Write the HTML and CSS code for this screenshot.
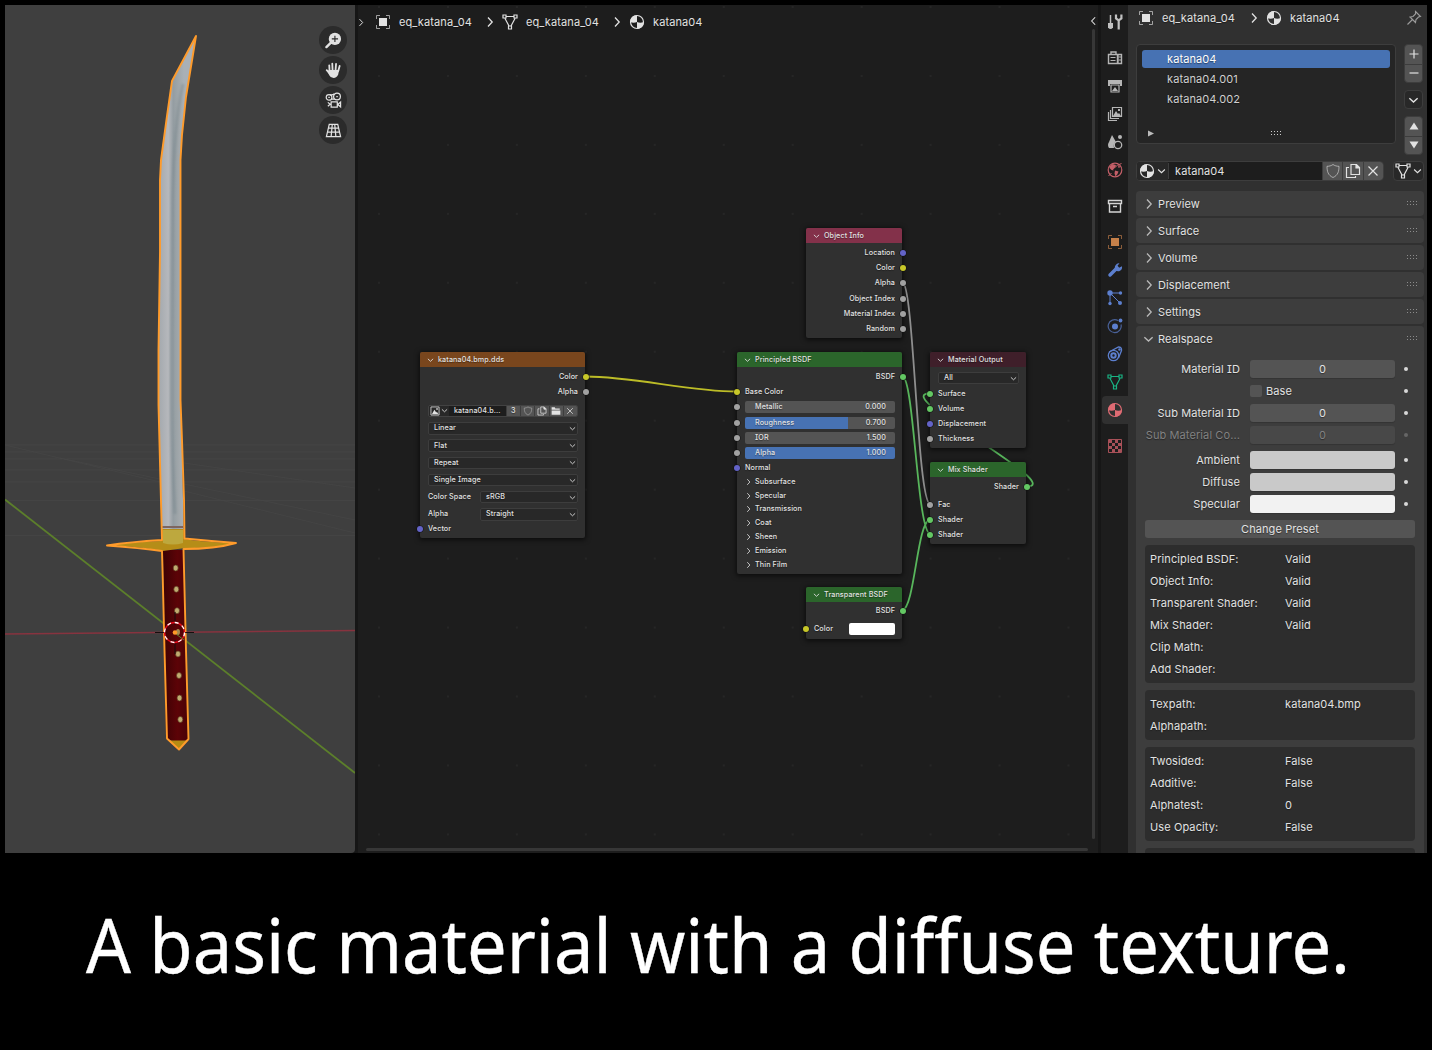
FILE: index.html
```html
<!DOCTYPE html>
<html lang="en">
<head>
<meta charset="utf-8">
<title>Katana material</title>
<link rel="stylesheet" href="styles.css">
</head>
<body>
<svg width="0" height="0" class="sprite" aria-hidden="true">
  <symbol id="object" viewBox="0 0 16 16"><path d="M1.500 5V1.500H5M11 1.500h3.500V5M14.500 11v3.500H11M5 14.500H1.500V11" fill="none" stroke="currentColor" stroke-opacity=".65"/><path d="M4 4h8v8H4z" fill="currentColor"/></symbol>
  <symbol id="mesh" viewBox="0 0 16 16"><path d="M4 2.500h8M3 4.500l4 7.500M13 4.500L9 12M1 1h3v3H1zM12 1h3v3h-3zM6.500 12h3v3h-3z" fill="none" stroke="currentColor" stroke-width="1.200"/></symbol>
  <symbol id="material" viewBox="0 0 16 16"><circle cx="8" cy="8" r="6.500" fill="none" stroke="currentColor" stroke-width="1.200"/><path d="M8 8V1.200C4 1.200 1.200 4 1.200 8 3 9 6 9 8 8zM8 8c2 1 4.500 1 6.800 0 0 4-3 6.800-6.800 6.800z" fill="currentColor"/></symbol>
  <symbol id="right" viewBox="0 0 8 12"><path d="M2 1.500L6.200 6 2 10.500" fill="none" stroke="currentColor" stroke-width="1.300"/></symbol>
  <symbol id="down" viewBox="0 0 12 8"><path d="M1.500 2L6 6.200 10.500 2" fill="none" stroke="currentColor" stroke-width="1.500"/></symbol>
  <symbol id="shield" viewBox="0 0 16 16"><path d="M8 1.500c1.800 1.300 3.800 1.800 6 1.800 0 5-1 9-6 11.200C3 12.300 2 8.300 2 3.300c2.200 0 4.200-.5 6-1.800z" fill="none" stroke="currentColor" stroke-opacity=".6"/></symbol>
  <symbol id="copy" viewBox="0 0 16 16"><path d="M6 1.500h5.500L14.500 4.500v7H6zM11 1.500V5h3.500M4 4.500H1.500v10h9V13" fill="none" stroke="currentColor" stroke-width="1.200"/><path d="M11 1l4 4h-4z" fill="currentColor"/></symbol>
  <symbol id="close" viewBox="0 0 16 16"><path d="M3.500 3.500l9 9M12.500 3.500l-9 9" stroke="currentColor" stroke-width="1.200"/></symbol>
  <symbol id="grip" viewBox="0 0 12 5"><path d="M0 .5h12M0 3.500h12" stroke="currentColor" stroke-dasharray="1 2"/></symbol>
  <symbol id="pin" viewBox="0 0 16 16"><path d="M9.500 1.500l5 5-2 .5-2.500 2.500-.5 3-5.500-5.500 3-.5L9.500 4zM6.500 9.500L1.500 14.500" fill="none" stroke="currentColor" stroke-width="1.100"/></symbol>
  <symbol id="image" viewBox="0 0 16 16"><path d="M1.500 1.500h13v13h-13z" fill="none" stroke="currentColor" stroke-width="1.300"/><path d="M3 13l4-7 3 4.500L11 9l2.500 4zM10 3.500h2.500V6H10z" fill="currentColor"/></symbol>
  <symbol id="folder" viewBox="0 0 16 16"><path d="M1 2h5l1 2h7v2H1zM1 7h14v7H1z" fill="currentColor"/></symbol>
</svg>

<main class="workspace">
  <section class="viewport">
    <svg class="scene" viewBox="5 5 350 848">
      <defs>
        <linearGradient id="steel" gradientUnits="userSpaceOnUse" x1="160" y1="0" x2="184" y2="0">
          <stop offset="0" stop-color="#a6abb0"/><stop offset=".35" stop-color="#b6b8bc"/><stop offset=".55" stop-color="#949da2"/><stop offset=".8" stop-color="#a2a8ab"/><stop offset="1" stop-color="#a9b0b6"/>
        </linearGradient>
        <linearGradient id="grip-red" gradientUnits="userSpaceOnUse" x1="163" y1="0" x2="189" y2="0">
          <stop offset="0" stop-color="#3c0204"/><stop offset=".55" stop-color="#5c0307"/><stop offset="1" stop-color="#480307"/>
        </linearGradient>
        <filter id="soft" x="-1" width="3"><feGaussianBlur stdDeviation="1"/></filter>
      </defs>
      <g stroke="#474747" fill="none"><path d="M5 445H355M5 452H355M5 459H355M5 470H355M5 482H355M5 500.500H355M5 535.500H355" opacity=".7"/><path d="M5 445L160 482M184 491L355 533M184 463L355 488M60 458L355 520" opacity=".6"/></g>
      <path d="M5 634L355 630.500" stroke="#87333f" stroke-width="1.400"/>
      <path d="M5 499.500L355 773" stroke="#5c7f2b" stroke-width="1.800"/>
      <path d="M196 36L172 81 162 150 160 175 160 252 158.500 350 158.500 405 161.500 530H183.500L182 440 180.500 400V160L182 135 186 97z" fill="url(#steel)"/>
      <path d="M183 84q-9 40-10.500 115l-1 140v65q0 50 3.500 110" stroke="#718087" stroke-width="3" fill="none" opacity=".4" filter="url(#soft)"/>
      <path d="M163 549.500L166 738 179 744 188 739 184 550z" fill="url(#grip-red)"/>
      <path d="M162 529h22l1 10q15 3 51 4-14 5-51 5l-22 3q-20-4-56-6 27-3 54-4z" fill="#b58d18"/>
      <path d="M163 530h20v13q-10 3-20 0z" fill="#bda83e"/>
      <path d="M162 527h22" stroke="#7d6560" stroke-width="2"/>
      <path d="M168 740.500h20l-9 9z" fill="#b58b13"/>
      <path d="M196 36L172 81 167 116 161 160 160 180 160 252 158.500 350 158.500 405 162 540Q130 542 107 545.500 140 548 162 551L163 588 164.500 650 167 738.500 179 749.500 188.500 739 186 650 183.500 549Q215 549 236 543 210 541 184.500 538.500L184 500 182 440 180.500 400V160L182 135 186 97z" fill="none" stroke="#ff9b2b" stroke-width="1.900" stroke-linejoin="round"/>
      <g fill="#c0ad71" stroke="#5d3920" stroke-width=".7"><ellipse cx="175.700" cy="568" rx="2.500" ry="3"/><ellipse cx="176.300" cy="589.300" rx="2.500" ry="3"/><ellipse cx="177" cy="610.700" rx="2.500" ry="3"/><ellipse cx="178" cy="654" rx="2.500" ry="3"/><ellipse cx="179" cy="675.500" rx="2.500" ry="3"/><ellipse cx="179.500" cy="698" rx="2.500" ry="3"/><ellipse cx="180.300" cy="719.500" rx="2.500" ry="3"/></g>
      <path d="M175 612v13M175 640v14M155 632.500h9M185 632.500h9" stroke="#160d0d"/>
      <circle cx="174.500" cy="632.500" r="10" fill="none" stroke="#e00a18" stroke-width="1.300"/>
      <circle cx="174.500" cy="632.500" r="10" fill="none" stroke="#fff" stroke-width="1.300" stroke-dasharray="3.900 3.950"/>
      <ellipse cx="178" cy="632" rx="2" ry="3" fill="#a28a50"/>
      <path d="M176 634l8 6" stroke="#5c7f2b"/>
      <circle cx="175" cy="632.500" r="2.300" fill="#ff9a28"/>
    </svg>
    <div class="gizmos">
      <span><svg viewBox="0 0 18 18"><circle cx="10.500" cy="7.300" r="6.500" fill="currentColor"/><path d="M6 11.500L1.500 16" stroke="currentColor" stroke-width="2.500" stroke-linecap="round"/><path d="M10.500 4v6.600M7.200 7.300h6.600" stroke="#2b2b2b" stroke-width="1.200"/></svg></span>
      <span><svg viewBox="0 0 18 18"><path d="M4.800 9.500L4.500 3.500M8 8.500L7.700 1.800M11.200 8.500l.5-6.500M14 9.500l1.500-5.300M6 13L1.800 8.600" stroke="currentColor" stroke-width="1.900" stroke-linecap="round"/><path d="M4 8.500h11l-1 4.500q-1.500 4-5 4-3 0-4.500-3L3 11z" fill="currentColor"/></svg></span>
      <span><svg viewBox="0 0 18 18" fill="none" stroke="currentColor" stroke-width="1.300"><circle cx="4.300" cy="5.700" r="3"/><circle cx="12.700" cy="4.800" r="3.600"/><path d="M5 2.800q3 1 5-1M7 7.500h3M6.500 10.500h6.500v5.500H6.500zM3 11l2.500 2L3 15M13.500 13.200l3-2.500v5z"/><path d="M3.500 5.700h1.600M12 4.800h1.500"/></svg></span>
      <span><svg viewBox="0 0 18 18" fill="none" stroke="currentColor" stroke-width="1.300"><path d="M4.500 2.500h9l3 13h-15zM3.600 6.500h10.800M2.700 10.700h12.600M7.700 2.500L6.500 15.500M10.300 2.500l1.200 13"/></svg></span>
    </div>
  </section>

  <section class="editor">
    <svg class="links" viewBox="358 5 740 848" fill="none" stroke-width="1.800">
      <defs><pattern id="dots" patternUnits="userSpaceOnUse" x="378" y="6" width="68.950" height="68.950"><path d="M0 0h2v2H0z" fill="#262626"/></pattern></defs>
      <path d="M358 5h740v848H358z" fill="url(#dots)"/>
      <path d="M585.500 376.500C635 376.500 688 391.500 737 391.500" stroke="#bcbc27"/>
      <path d="M902.500 282.500C914 284 917 500 930 504" stroke="#8e8e8e"/>
      <path d="M902.500 376.500C914 378 917 530 930 534M902.500 610.500C915 606 917 522 930 519.500M1026.500 486.500C1068 486.500 888 393.500 930 393.500" stroke="#58b65c"/>
    </svg>
    <header class="crumbs">
      <svg class="tiny"><use href="#right"/></svg>
      <svg class="ico"><use href="#object"/></svg><span>eq_katana_04</span>
      <svg class="sep"><use href="#right"/></svg>
      <svg class="ico"><use href="#mesh"/></svg><span>eq_katana_04</span>
      <svg class="sep"><use href="#right"/></svg>
      <svg class="ico"><use href="#material"/></svg><span>katana04</span>
    </header>
    <i class="vbar"></i><i class="hbar"></i>
    <svg class="toggle"><use href="#right"/></svg>

    <article class="node object-info">
      <h3><svg><use href="#down"/></svg>Object Info</h3>
      <p class="out vector">Location</p><p class="out color">Color</p><p class="out">Alpha</p><p class="out">Object Index</p><p class="out">Material Index</p><p class="out">Random</p>
    </article>

    <article class="node texture">
      <h3><svg><use href="#down"/></svg>katana04.bmp.dds</h3>
      <p class="out color">Color</p><p class="out">Alpha</p>
      <div class="datablock">
        <span class="pick"><svg class="pic"><use href="#image"/></svg><svg class="arrow"><use href="#down"/></svg></span><span class="name">katana04.b...</span><b>3</b><b><svg><use href="#shield"/></svg></b><b><svg><use href="#copy"/></svg></b><b><svg><use href="#folder"/></svg></b><b><svg><use href="#close"/></svg></b>
      </div>
      <div class="field"><span class="select">Linear<svg><use href="#down"/></svg></span></div>
      <div class="field"><span class="select">Flat<svg><use href="#down"/></svg></span></div>
      <div class="field"><span class="select">Repeat<svg><use href="#down"/></svg></span></div>
      <div class="field"><span class="select">Single Image<svg><use href="#down"/></svg></span></div>
      <div class="field"><label>Color Space</label><span class="select">sRGB<svg><use href="#down"/></svg></span></div>
      <div class="field"><label>Alpha</label><span class="select">Straight<svg><use href="#down"/></svg></span></div>
      <p class="in vector">Vector</p>
    </article>

    <article class="node principled">
      <h3><svg><use href="#down"/></svg>Principled BSDF</h3>
      <p class="out shader">BSDF</p><p class="in color">Base Color</p>
      <p class="in"><span class="slider">Metallic<em>0.000</em></span></p>
      <p class="in"><span class="slider rough">Roughness<em>0.700</em></span></p>
      <p class="in"><span class="slider">IOR<em>1.500</em></span></p>
      <p class="in"><span class="slider full">Alpha<em>1.000</em></span></p>
      <p class="in vector">Normal</p>
      <ul><li><svg><use href="#right"/></svg>Subsurface</li><li><svg><use href="#right"/></svg>Specular</li><li><svg><use href="#right"/></svg>Transmission</li><li><svg><use href="#right"/></svg>Coat</li><li><svg><use href="#right"/></svg>Sheen</li><li><svg><use href="#right"/></svg>Emission</li><li><svg><use href="#right"/></svg>Thin Film</li></ul>
    </article>

    <article class="node output">
      <h3><svg><use href="#down"/></svg>Material Output</h3>
      <div class="field"><span class="select">All<svg><use href="#down"/></svg></span></div>
      <p class="in shader">Surface</p><p class="in shader">Volume</p><p class="in vector">Displacement</p><p class="in">Thickness</p>
    </article>

    <article class="node mix">
      <h3><svg><use href="#down"/></svg>Mix Shader</h3>
      <p class="out shader">Shader</p><p class="in fac">Fac</p><p class="in shader">Shader</p><p class="in shader">Shader</p>
    </article>

    <article class="node transparent">
      <h3><svg><use href="#down"/></svg>Transparent BSDF</h3>
      <p class="out shader">BSDF</p><p class="in color tint">Color<i></i></p>
    </article>
  </section>

  <nav class="tabs">
    <span class="tool"><svg viewBox="0 0 16 16"><path d="M3.500 1v8" stroke="currentColor" stroke-width="1.500"/><path d="M1 9h5v4.500q-2.500 3-5 0z" fill="currentColor"/><path d="M9 .5v4l2.700 2 2.700-2v-4M11.700 6v9.500" fill="none" stroke="currentColor" stroke-width="2.200"/></svg></span>
    <span><svg viewBox="0 0 16 16"><path d="M1.500 4.500h9v9h-9zM4 4V2h5v2M11 4.500h3.500v9H11z" fill="none" stroke="currentColor" stroke-width="1.400"/><path d="M3.500 7.500h5M3.500 10.500h5M11.500 7h3M11.500 10h3" stroke="currentColor"/></svg></span>
    <span><svg viewBox="0 0 16 16"><path d="M1 2h14v6h-2V6H3v2H1z" fill="currentColor"/><path d="M4 7h8v7H4z" fill="none" stroke="currentColor" stroke-width="1.200"/><path d="M5 13l3-4 3 4z" fill="currentColor"/></svg></span>
    <span><svg viewBox="0 0 16 16"><path d="M5.500 1.500h9v9h-9zM3.500 4v8.500H12M1.500 6v8.500H10" fill="none" stroke="currentColor" stroke-width="1.200"/><path d="M6 10l3-5 2 3 1-1 2 3zM11 3h2v2h-2z" fill="currentColor"/></svg></span>
    <span><svg viewBox="0 0 16 16"><path d="M5 1l4 7q-3 1-2 6H2q-2-3 0-6z" fill="currentColor"/><circle cx="11" cy="11" r="3.700" fill="none" stroke="currentColor" stroke-width="1.300"/><circle cx="13" cy="3" r="2" fill="currentColor"/></svg></span>
    <span class="red"><svg viewBox="0 0 16 16"><circle cx="8" cy="8" r="6.800" fill="none" stroke="currentColor" stroke-width="1.200"/><path d="M2.500 4.500l3-2.500 3.500 1-1 2.500-2 1 .5 2-2-.5-2-2zM8 8.500l3.500 1-1 2.500-2 2.500-1-3zM11 3l2.500 2-2 1z" fill="currentColor"/><path d="M14.500 1.500Q11 2 6 7M1.500 14l3-3" stroke="currentColor" fill="none"/></svg></span>
    <span class="collection"><svg viewBox="0 0 16 16"><path d="M1.500 2.500h13v3h-13zM2.500 6v8h11V6M6 8.500h4" fill="none" stroke="currentColor" stroke-width="1.400"/></svg></span>
    <span class="orange"><svg><use href="#object"/></svg></span>
    <span class="blue"><svg viewBox="0 0 16 16"><path d="M3 13l7-7" stroke="currentColor" stroke-width="3.500" stroke-linecap="round"/><path d="M12.500 1.200l-2 2.500 1.500 2 3-1.500q.5 3-2 4.500t-5-1q-1-4 2-6 1-.7 2.500-.5z" fill="currentColor"/></svg></span>
    <span class="blue"><svg viewBox="0 0 16 16"><path d="M3 3h10M3 3l10 10M3 3v10" stroke="currentColor"/><g fill="currentColor"><circle cx="3" cy="3" r="2.700"/><circle cx="13.500" cy="3" r="1.700"/><circle cx="13" cy="13" r="2"/><circle cx="3" cy="13.500" r="1.700"/></g></svg></span>
    <span class="blue"><svg viewBox="0 0 16 16"><path d="M11 2.500A6.500 6.500 0 1 0 14 6.500" fill="none" stroke="currentColor" stroke-width="1.200" opacity=".7"/><circle cx="8" cy="8.500" r="3" fill="currentColor"/><circle cx="13.500" cy="2.500" r="1.900" fill="currentColor"/></svg></span>
    <span class="blue"><svg viewBox="0 0 16 16" fill="none" stroke="currentColor" stroke-width="1.300"><path d="M2 6L11.500 1q3.500 0 3 3.500L11.500 12"/><circle cx="6.500" cy="9.500" r="5.200"/><circle cx="6.500" cy="9.500" r="2.200" stroke-width="2"/><circle cx="12.500" cy="3.500" r=".7"/></svg></span>
    <span class="green"><svg><use href="#mesh"/></svg></span>
    <span class="red active"><svg><use href="#material"/></svg></span>
    <span class="red last"><svg viewBox="0 0 16 16"><path d="M1.500 1.500h13v13h-13z" fill="none" stroke="currentColor"/><path d="M2 2h3v3H2zM8 2h3v3H8zM5 5h3v3H5zM11 5h3v3h-3zM2 8h3v3H2zM8 8h3v3H8zM5 11h3v3H5zM11 11h3v3h-3z" fill="currentColor"/></svg></span>
  </nav>

  <aside class="props">
    <header class="path">
      <svg class="ico"><use href="#object"/></svg><span>eq_katana_04</span><svg class="sep"><use href="#right"/></svg><svg class="ico"><use href="#material"/></svg><span>katana04</span><svg class="ico pin"><use href="#pin"/></svg>
    </header>
    <div class="slots">
      <div class="list">
        <div class="item sel">katana04</div><div class="item">katana04.001</div><div class="item">katana04.002</div>
        <div class="foot"><svg class="tri" viewBox="0 0 6 6"><path d="M0 0l6 3-6 3z" fill="currentColor"/></svg><svg class="grip"><use href="#grip"/></svg></div>
      </div>
      <div class="side">
        <div class="stack"><b><svg viewBox="0 0 12 12"><path d="M6 1.500v9M1.500 6h9" stroke="currentColor" stroke-width="1.200"/></svg></b><b><svg viewBox="0 0 12 12"><path d="M1.500 6h9" stroke="currentColor" stroke-width="1.200"/></svg></b></div>
        <div class="stack dark"><b><svg><use href="#down"/></svg></b></div>
        <div class="stack"><b><svg viewBox="0 0 12 12"><path d="M6 2.500l4.500 7h-9z" fill="currentColor"/></svg></b><b><svg viewBox="0 0 12 12"><path d="M6 9.500l4.500-7h-9z" fill="currentColor"/></svg></b></div>
      </div>
    </div>
    <div class="matrow">
      <div class="matid"><span class="pick"><svg class="ico"><use href="#material"/></svg><svg class="arrow"><use href="#down"/></svg></span><span class="name">katana04</span><b><svg><use href="#shield"/></svg></b><b><svg><use href="#copy"/></svg></b><b><svg><use href="#close"/></svg></b></div>
      <span class="pick link"><svg class="ico"><use href="#mesh"/></svg><svg class="arrow"><use href="#down"/></svg></span>
    </div>
    <div class="panels">
      <div class="panel"><svg class="sep"><use href="#right"/></svg>Preview<svg class="grip"><use href="#grip"/></svg></div>
      <div class="panel"><svg class="sep"><use href="#right"/></svg>Surface<svg class="grip"><use href="#grip"/></svg></div>
      <div class="panel"><svg class="sep"><use href="#right"/></svg>Volume<svg class="grip"><use href="#grip"/></svg></div>
      <div class="panel"><svg class="sep"><use href="#right"/></svg>Displacement<svg class="grip"><use href="#grip"/></svg></div>
      <div class="panel"><svg class="sep"><use href="#right"/></svg>Settings<svg class="grip"><use href="#grip"/></svg></div>
      <div class="real">
        <div class="panel"><svg class="dn"><use href="#down"/></svg>Realspace<svg class="grip"><use href="#grip"/></svg></div>
        <div class="form">
          <div class="row"><label>Material ID</label><span class="num">0</span><i></i></div>
          <div class="row"><label></label><span class="check"><u></u>Base</span><i></i></div>
          <div class="row"><label>Sub Material ID</label><span class="num">0</span><i></i></div>
          <div class="row off"><label>Sub Material Co...</label><span class="num">0</span><i></i></div>
          <div class="row gap"><label>Ambient</label><span class="num swatch"></span><i></i></div>
          <div class="row"><label>Diffuse</label><span class="num swatch"></span><i></i></div>
          <div class="row"><label>Specular</label><span class="num swatch bright"></span><i></i></div>
        </div>
        <div class="preset">Change Preset</div>
        <dl><dt>Principled BSDF:</dt><dd>Valid</dd><dt>Object Info:</dt><dd>Valid</dd><dt>Transparent Shader:</dt><dd>Valid</dd><dt>Mix Shader:</dt><dd>Valid</dd><dt>Clip Math:</dt><dd></dd><dt>Add Shader:</dt><dd></dd></dl>
        <dl><dt>Texpath:</dt><dd>katana04.bmp</dd><dt>Alphapath:</dt><dd></dd></dl>
        <dl><dt>Twosided:</dt><dd>False</dd><dt>Additive:</dt><dd>False</dd><dt>Alphatest:</dt><dd>0</dd><dt>Use Opacity:</dt><dd>False</dd></dl>
        <dl><dt></dt><dd></dd></dl>
      </div>
    </div>
  </aside>
</main>
<svg class="caption" viewBox="0 0 1432 197"><text x="86" y="120" textLength="1264" lengthAdjust="spacingAndGlyphs">A basic material with a diffuse texture.</text></svg>
</body>
</html>
```
FILE: styles.css
```css
* { box-sizing: border-box; }
body { margin: 0; height: 1050px; background: #000; color: #e2e2e2; overflow: hidden;
  font: 11px/16px Inter, sans-serif; letter-spacing: .1px; font-feature-settings: "cv08"; text-shadow: 0 1px 1px rgba(0,0,0,.4); }
h3, p, ul, dl, dd { margin: 0; padding: 0; font-weight: inherit; }
b, em, i, u { font-weight: inherit; font-style: normal; text-decoration: none; }
svg { display: block; flex: none; }
.sprite { position: absolute; }
.workspace { display: flex; width: 1422px; height: 848px; margin: 5px 5px 0; background: #161616; overflow: hidden; }

.viewport { position: relative; width: 350px; margin-right: 3px; background: #3f3f3f; border-radius: 0 0 4px 0; }
.scene { position: absolute; inset: 0; width: 350px; height: 848px; }
.gizmos { position: absolute; top: 21px; right: 8px; display: flex; flex-direction: column; gap: 2px; }
.gizmos span { width: 28px; height: 28px; border-radius: 50%; background: #2b2b2b; display: grid; place-items: center; color: #e2e2e2; }
.gizmos svg { width: 17px; height: 17px; }

.editor { position: relative; width: 740px; margin-right: 3px; background: #1d1d1d; overflow: hidden; }
.links { position: absolute; inset: 0; width: 740px; height: 848px; }
.crumbs { position: relative; display: flex; align-items: center; height: 34px; }
.ico { width: 16px; height: 16px; }
.sep { width: 8px; height: 12px; }
.crumbs .tiny { width: 6px; height: 9px; margin-right: 11px; }
.crumbs span { width: 71px; margin-left: 8px; white-space: nowrap; }
.crumbs .sep { margin: 0 8px 0 16px; }
.vbar { position: absolute; left: 734px; top: 24px; width: 3px; height: 810px; background: #373737; border-radius: 2px; }
.hbar { position: absolute; left: 8px; top: 843px; width: 722px; height: 3px; background: #373737; border-radius: 2px; }
.toggle { position: absolute; left: 732px; top: 11px; width: 7px; height: 10px; transform: scaleX(-1); }

.node { position: absolute; background: #303030; border-radius: 2px; box-shadow: 0 1px 5px 1px rgba(0,0,0,.6); font-size: 7.2px; font-weight: 500; line-height: 12px; letter-spacing: .1px; }
.node h3 { height: 14.5px; display: flex; align-items: center; gap: 4px; padding: 1px 0 0 7px; margin-bottom: 3px; border-radius: 2px 2px 0 0; font-size: 7.2px; font-weight: 500; white-space: nowrap; }
.node h3 svg { width: 7px; height: 6px; }
.node p { position: relative; height: 15.2px; display: flex; align-items: center; padding: 0 7px; }
.node .out { justify-content: flex-end; }
.node p::before { content: ""; position: absolute; top: 4.500px; width: 6px; height: 6px; border-radius: 50%; background: #a1a1a1; box-shadow: 0 0 0 .5px #111; }
.node .in::before { left: -3px; }
.node .out::before { right: -3.500px; }
.node .color::before { background: #c7c729; }
.node .vector::before { background: #6363c7; }
.node .shader::before { background: #63c763; }
.node .in { padding-left: 8px; }
.object-info { left: 448px; top: 223px; width: 96px; height: 110px; }
.object-info h3 { background: #83314a; }
.texture { left: 62px; top: 347px; width: 165px; height: 186px; }
.texture h3 { background: #79461d; }
.texture .in { margin-top: -1.500px; }
.principled { left: 379px; top: 347px; width: 165px; height: 222px; }
.principled h3, .mix h3, .transparent h3 { background: #2b652b; }
.output { left: 572px; top: 347px; width: 96px; height: 96px; }
.output h3 { background: #3f1f2a; }
.output p { height: 15px; }
.mix { left: 572px; top: 457px; width: 96px; height: 82px; }
.transparent { left: 448px; top: 582px; width: 96px; height: 52px; }
.transparent h3 { margin-bottom: 2px; }
.mix .fac { margin-top: 2.500px; }
.transparent .tint { margin-top: 2.500px; justify-content: space-between; }
.tint i { width: 46px; height: 12px; border-radius: 2px; background: #fff; }
.datablock { display: flex; height: 12px; margin: 4.800px 7px 3.200px 8px; border: 1px solid #424242; border-radius: 2px; background: #1d1d1d; overflow: hidden; align-items: center; }
.datablock .pick { width: 20px; display: flex; align-items: center; justify-content: space-evenly; background: #282828; height: 12px; }
.datablock .pic { width: 10px; height: 10px; }
.arrow { width: 9px; height: 6px; }
.datablock .arrow { width: 7px; height: 5px; }
.datablock .name { width: 57px; padding-left: 5px; }
.datablock b { width: 14.300px; height: 12px; display: grid; place-items: center; background: #545454; border-left: 1px solid #3d3d3d; }
.datablock b svg { width: 10px; height: 10px; }
.field { display: flex; align-items: center; height: 17.200px; padding: 0 7px 0 8px; }
.field label { width: 52px; }
.select { flex: 1; display: flex; justify-content: space-between; align-items: center; height: 12.500px; padding: 0 1px 0 5px; border: 1px solid #3d3d3d; border-radius: 2px; background: #282828; }
.select svg { width: 7px; height: 5px; }
.principled .in { padding-right: 7px; }
.slider { display: flex; flex: 1; justify-content: space-between; align-items: center; height: 12px; padding: 0 9px 0 10px; background: #545454; border-radius: 2px; }
.slider.rough { background: linear-gradient(90deg, #4772b3 69%, #545454 69%); }
.slider.full { background: #4772b3; }
.principled ul { list-style: none; margin-top: -1px; }
.principled li { display: flex; align-items: center; gap: 4px; height: 13.850px; padding-left: 9px; }
.principled li svg { width: 5px; height: 8px; }

.tabs { width: 27px; padding-left: 1px; background: #1d1d1d; display: flex; flex-direction: column; color: #b5b5b5; }
.tabs span { height: 28px; display: grid; place-items: center; }
.tabs svg { width: 16px; height: 16px; }
.tabs .tool { height: 34px; margin-bottom: 5px; color: #c0c0c0; }
.tabs .red { color: #c45f68; }
.tabs .blue { color: #5c7fce; }
.tabs .green { color: #19b384; }
.tabs .collection { height: 36px; margin: 4px 0 3px; color: #d5d5d5; }
.tabs .orange { margin-top: 1px; height: 28px; color: #c68049; }
.tabs .active { background: #303030; border-radius: 4px 0 0 4px; color: #df6b73; }
.tabs .last { margin-top: 8px; color: #a85058; }

.props { width: 299px; padding: 0 3px 0 8px; background: #303030; }
.path { display: flex; align-items: center; height: 26px; padding-left: 2px; }
.path span { margin-left: 8px; }
.path .sep { margin: 0 8px 0 15px; }
.path .pin { margin-left: auto; margin-right: 2px; opacity: .6; }
.slots { display: flex; justify-content: space-between; margin-top: 13px; padding-right: 1px; }
.list { width: 260px; height: 100px; padding: 6px 5px; background: #252525; border: 1px solid #3d3d3d; border-radius: 4px; }
.item { height: 18px; margin-bottom: 2px; padding: 1px 25px; border-radius: 3px; color: #d0d0d0; }
.sel { background: #4772b3; color: #fff; margin-top: -1px; }
.foot { position: relative; margin-top: 20px; height: 10px; color: #bbb; }
.tri { position: absolute; left: 6px; top: 2px; width: 6px; height: 7px; }
.grip { width: 12px; height: 5px; color: #8c8c8c; }
.foot .grip { position: absolute; left: 129px; top: 3px; color: #ccc; }
.side { display: flex; flex-direction: column; gap: 7px; width: 19px; }
.stack { border-radius: 4px; background: #545454; border: 1px solid #3d3d3d; }
.stack b { height: 18.500px; display: grid; place-items: center; }
.stack b + b { border-top: 1px solid #3d3d3d; }
.stack.dark { background: #282828; }
.stack svg { width: 12px; height: 12px; }
.stack.dark svg { width: 11px; height: 8px; }
.stack.dark b { height: 17px; }
.matrow { display: flex; justify-content: space-between; margin-top: 6px; height: 20px; }
.matid { display: flex; width: 248px; border: 1px solid #3d3d3d; border-radius: 4px; background: #1d1d1d; overflow: hidden; align-items: center; }
.pick { width: 31px; height: 20px; display: flex; align-items: center; justify-content: space-evenly; background: #282828; }
.matid .name { flex: 1; padding-left: 6px; border-left: 1px solid #3d3d3d; }
.matid b { width: 20.300px; height: 20px; display: grid; place-items: center; background: #545454; border-left: 1px solid #3d3d3d; }
.matid b svg { width: 16px; height: 16px; }
.link { border: 1px solid #3d3d3d; border-radius: 4px; }
.panels { display: flex; flex-direction: column; gap: 2px; margin-top: 10px; }
.panel { height: 25px; display: flex; align-items: center; padding: 0 5px 0 9px; background: #3d3d3d; border-radius: 4px; }
.panel .sep { margin-right: 5px; opacity: .75; }
.panel .dn { width: 11px; height: 8px; margin: 0 4px 0 -2px; opacity: .75; }
.panel .grip { margin-left: auto; }
.real { background: #3d3d3d; border-radius: 4px; padding-bottom: 40px; }
.form { display: grid; gap: 4px; padding: 9px 14px 0 9px; }
.row { display: grid; grid-template-columns: 95px 145px 1fr; column-gap: 10px; align-items: center; height: 18px; }
.row label { text-align: right; white-space: nowrap; }
.row i { width: 4px; height: 4px; border-radius: 50%; background: #d8d8d8; margin-left: -1px; }
.num { height: 18px; border-radius: 3px; background: #545454; text-align: center; line-height: 18px; box-shadow: 0 1px 1px rgba(0,0,0,.15); }
.swatch { background: #c9c9c9; }
.bright { background: #f2f2f2; }
.check { display: flex; align-items: center; gap: 4px; }
.check u { width: 12px; height: 12px; border-radius: 2px; background: #545454; }
.off { color: #828282; }
.off .num { background: #484848; }
.off i { background: #666; }
.row.gap { height: 21px; padding-top: 3px; }
.preset { margin: 7px 9px 7px; height: 18px; border-radius: 3px; background: #545454; text-align: center; line-height: 18px; }
.real dl { display: grid; grid-template-columns: 135px 1fr; grid-auto-rows: 22px; line-height: 22px; margin: 0 9px 7px; padding: 3px 5px; background: #2d2d2d; border-radius: 4px; white-space: nowrap; }
.caption { width: 1432px; height: 197px; }
.caption text { font: 75px "Noto Sans", sans-serif; fill: #fff; stroke: #fff; stroke-width: .4px; text-shadow: none; letter-spacing: 0; }
```
